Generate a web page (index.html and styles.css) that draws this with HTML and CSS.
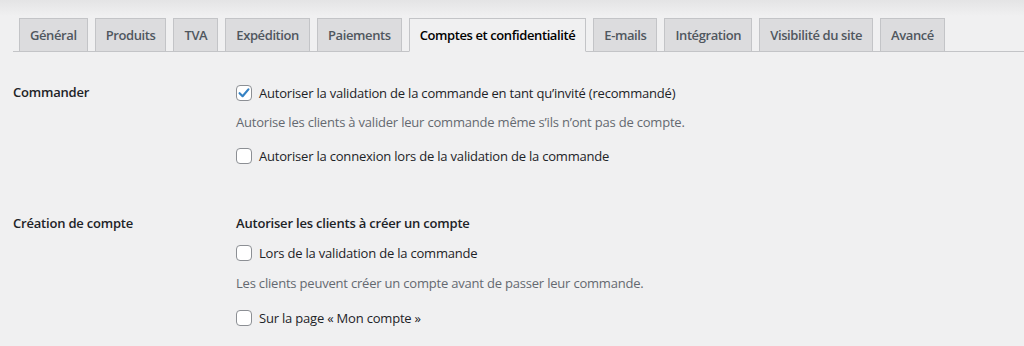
FILE: index.html
```html
<!DOCTYPE html>
<html lang="fr">
<head>
<meta charset="utf-8">
<title>Réglages</title>
<link rel="stylesheet" href="styles.css">
</head>
<body>
<div class="wrap">
  <nav class="tabs">
    <a class="tab">Général</a>
    <a class="tab">Produits</a>
    <a class="tab">TVA</a>
    <a class="tab">Expédition</a>
    <a class="tab">Paiements</a>
    <a class="tab active">Comptes et confidentialité</a>
    <a class="tab">E-mails</a>
    <a class="tab">Intégration</a>
    <a class="tab">Visibilité du site</a>
    <a class="tab">Avancé</a>
  </nav>
  <div class="form">
    <div class="row first">
      <div class="label">Commander</div>
      <div class="field">
        <label class="check"><span class="box checked"><svg viewBox="0 0 16 16" width="16" height="16"><path d="M3.6 8.2 L6.6 11.2 L12.4 4.4" fill="none" stroke="#3582c4" stroke-width="2.2" stroke-linecap="round" stroke-linejoin="round"/></svg></span>Autoriser la validation de la commande en tant qu’invité (recommandé)</label>
        <p class="desc">Autorise les clients à valider leur commande même s’ils n’ont pas de compte.</p>
        <label class="check gap"><span class="box"></span>Autoriser la connexion lors de la validation de la commande</label>
      </div>
    </div>
    <div class="row second">
      <div class="label">Création de compte</div>
      <div class="field">
        <div class="heading">Autoriser les clients à créer un compte</div>
        <label class="check sub"><span class="box"></span>Lors de la validation de la commande</label>
        <p class="desc">Les clients peuvent créer un compte avant de passer leur commande.</p>
        <label class="check gap"><span class="box"></span>Sur la page « Mon compte »</label>
      </div>
    </div>
  </div>
</div>
</body>
</html>
```
FILE: styles.css
```css
html, body {
  margin: 0;
  padding: 0;
}
body {
  background: #f0f0f1 linear-gradient(#e4e4e5 0, #f0f0f1 16px) no-repeat;
  font-family: "Open Sans", "Noto Sans", sans-serif;
  font-size: 13px;
  letter-spacing: -0.2px;
  color: #1d2327;
  height: 346px;
  overflow: hidden;
}
.wrap {
  padding: 18px 0 0 13px;
}
.tabs {
  display: flex;
  border-bottom: 1px solid #c3c4c7;
  padding-left: 6px;
  gap: 7px;
}
.tab {
  display: block;
  background: #dcdcde;
  border: 1px solid #c3c4c7;
  padding: 4px 10px;
  line-height: 24px;
  font-size: 13px;
  letter-spacing: -0.4px;
  font-weight: 600;
  color: #50575e;
  margin-bottom: -1px;
}
.tab.active {
  background: #f0f0f1;
  color: #000;
  border-bottom-color: #f0f0f1;
}
.form {
  display: flex;
  flex-direction: column;
}
.row {
  display: grid;
  grid-template-columns: 223px 1fr;
}
.row.first {
  padding-top: 31px;
}
.row.second {
  padding-top: 47px;
}
.label {
  font-weight: 600;
  line-height: 20px;
  font-size: 13px;
}
.row.first .label {
  margin-top: -1px;
}
.field {
  display: flex;
  flex-direction: column;
  align-items: flex-start;
}
.check {
  display: flex;
  align-items: center;
  line-height: 20px;
  height: 20px;
}
.box {
  width: 14px;
  height: 14px;
  border: 1px solid #8c8f94;
  border-radius: 4px;
  background: #fff;
  margin-right: 7px;
  position: relative;
  flex: none;
}
.box svg {
  position: absolute;
  left: -1px;
  top: -1px;
}
.desc {
  margin: 9px 0 0;
  line-height: 20px;
  color: #646970;
}
.check.gap {
  margin-top: 14px;
}
.row.second .desc {
  margin-top: 10px;
}
.row.second .check.gap {
  margin-top: 15px;
}
.check.sub {
  margin-top: 10px;
}
.heading {
  font-weight: 600;
  line-height: 20px;
}
```
